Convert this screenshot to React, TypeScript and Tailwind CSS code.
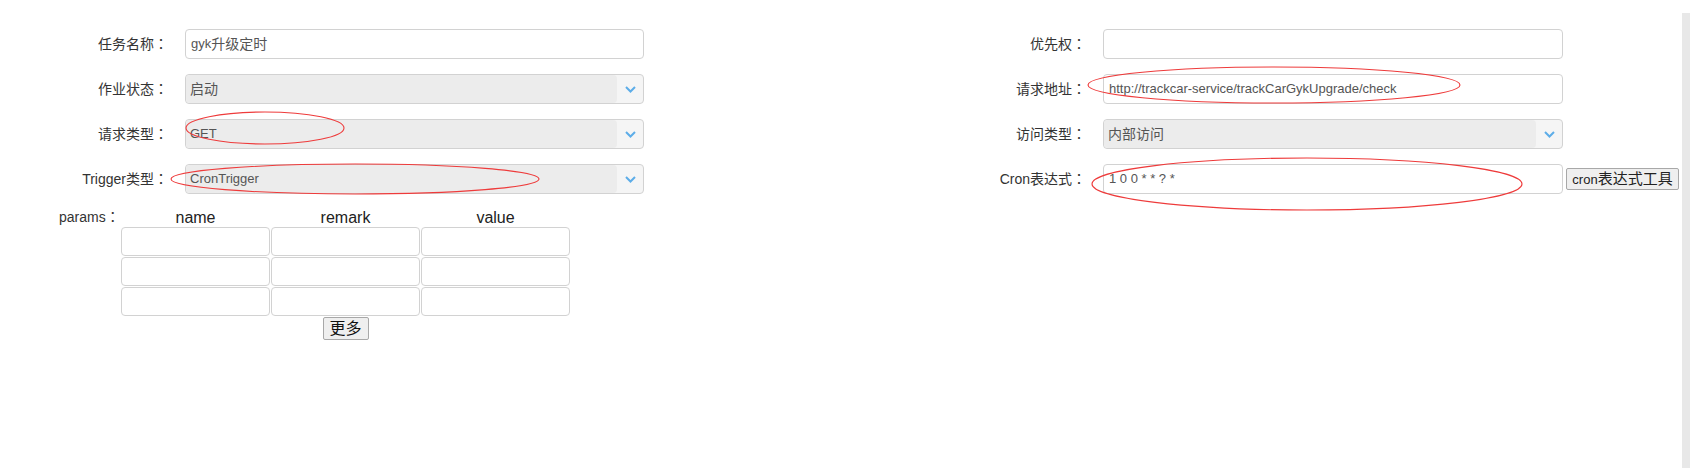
import React from 'react';

const CJK = /([\u3000-\u303f\u4e00-\u9fff\uff00-\uffef]+)/;

// latin runs keep the parent size, CJK runs get their own class
function Mixed({ text, cjk = 'text-[14px]' }: { text: string; cjk?: string }) {
  return (
    <>
      {text.split(CJK).map((part, i) =>
        CJK.test(part) ? (
          <span key={i} className={cjk}>
            {part}
          </span>
        ) : (
          <React.Fragment key={i}>{part}</React.Fragment>
        )
      )}
    </>
  );
}

// the reference colon sits centred in its em box, as in the JP face
function Colon() {
  return <span className="text-[14px] font-['Noto_Sans_CJK_JP',sans-serif]">：</span>;
}

function Chevron() {
  return (
    <svg width="11" height="7" viewBox="0 0 11 7">
      <path d="M1 1 L5.5 5.5 L10 1" fill="none" stroke="#5dade8" strokeWidth="2" />
    </svg>
  );
}

function TextBox({ value, width }: { value?: string; width: string }) {
  return (
    <div
      className={`h-[30px] ${width} border border-[#d2d2d2] rounded-[4px] bg-white flex items-center pl-[5px] text-[13px] text-[#555]`}
    >
      {value && <Mixed text={value} />}
    </div>
  );
}

function SelectBox({ value, width }: { value: string; width: string }) {
  return (
    <div
      className={`h-[30px] ${width} border border-[#d2d2d2] rounded-[4px] bg-[#f5f5f5] flex`}
    >
      <div className="flex-1 bg-[#ececec] rounded-[4px] flex items-center pl-[4px] text-[13px] text-[#555]">
        <Mixed text={value} />
      </div>
      <div className="w-[26px] flex items-center justify-center">
        <Chevron />
      </div>
    </div>
  );
}

function Row({
  label,
  labelWidth,
  children,
}: {
  label: string;
  labelWidth: string;
  children: React.ReactNode;
}) {
  return (
    <div className="flex items-center h-[30px]">
      <div className={`${labelWidth} text-right text-[14px] text-[#333]`}>
        <Mixed text={label} />
        <Colon />
      </div>
      <div className="ml-[17px] flex items-center">{children}</div>
    </div>
  );
}

function Params() {
  const cols = ['name', 'remark', 'value'];
  return (
    <div className="flex mt-[15px]">
      <div className="w-[121px] pl-[59px] text-[14px] text-[#333] leading-[15px] whitespace-nowrap">
        params<Colon />
      </div>
      <div className="w-[449px]">
        <div className="grid grid-cols-[repeat(3,149px)] gap-x-[1px] h-[18px] leading-[18px] text-[16px] text-[#222]">
          {cols.map((c) => (
            <div key={c} className="text-center">
              {c}
            </div>
          ))}
        </div>
        <div className="grid grid-cols-[repeat(3,149px)] gap-[1px]">
          {Array.from({ length: 9 }).map((_, i) => (
            <div key={i} className="h-[29px] border border-[#d2d2d2] rounded-[4px] bg-white" />
          ))}
        </div>
        <div className="flex justify-center mt-[1px]">
          <button className="h-[23px] w-[46px] border border-[#a8a8a8] rounded-[2px] bg-[#efefef] text-[16px] leading-[20px] text-[#111]">
            更多
          </button>
        </div>
      </div>
    </div>
  );
}

export default function App() {
  return (
    <div className="relative flex w-[1690px] h-[468px] bg-white font-['Liberation_Sans','Noto_Sans_CJK_SC',sans-serif]">
      <div className="flex-1 pt-[29px] flex">
        <div className="w-[900px]">
          <div className="flex flex-col gap-[15px]">
            <Row label="任务名称" labelWidth="w-[168px]">
              <TextBox value="gyk升级定时" width="w-[459px]" />
            </Row>
            <Row label="作业状态" labelWidth="w-[168px]">
              <SelectBox value="启动" width="w-[459px]" />
            </Row>
            <Row label="请求类型" labelWidth="w-[168px]">
              <SelectBox value="GET" width="w-[459px]" />
            </Row>
            <Row label="Trigger类型" labelWidth="w-[168px]">
              <SelectBox value="CronTrigger" width="w-[459px]" />
            </Row>
          </div>
          <Params />
        </div>

        <div className="flex flex-col gap-[15px]">
          <Row label="优先权" labelWidth="w-[186px]">
            <TextBox width="w-[460px]" />
          </Row>
          <Row label="请求地址" labelWidth="w-[186px]">
            <TextBox value="http://trackcar-service/trackCarGykUpgrade/check" width="w-[460px]" />
          </Row>
          <Row label="访问类型" labelWidth="w-[186px]">
            <SelectBox value="内部访问" width="w-[460px]" />
          </Row>
          <Row label="Cron表达式" labelWidth="w-[186px]">
            <TextBox value="1 0 0 * * ? *" width="w-[460px]" />
            <button className="ml-[3px] h-[22px] w-[113px] border border-[#a8a8a8] rounded-[2px] bg-[#efefef] text-[13px] font-normal text-[#222] leading-[20px] whitespace-nowrap">
              <Mixed text="cron表达式工具" cjk="text-[15px]" />
            </button>
          </Row>
        </div>
      </div>

      {/* scrollbar track */}
      <div className="w-[8px] mt-[13px] bg-[#e8e8e8]" />

      {/* red annotation marks drawn over the form */}
      <svg className="absolute inset-0 pointer-events-none" width="1690" height="468">
        <g fill="none" stroke="#ee3b3b" strokeWidth="1.1">
          <ellipse cx="265" cy="128" rx="79" ry="16" />
          <ellipse cx="355" cy="179" rx="184" ry="15" />
          <ellipse cx="1274" cy="85" rx="186" ry="18" />
          <ellipse cx="1307" cy="184" rx="215" ry="26" />
        </g>
      </svg>
    </div>
  );
}
